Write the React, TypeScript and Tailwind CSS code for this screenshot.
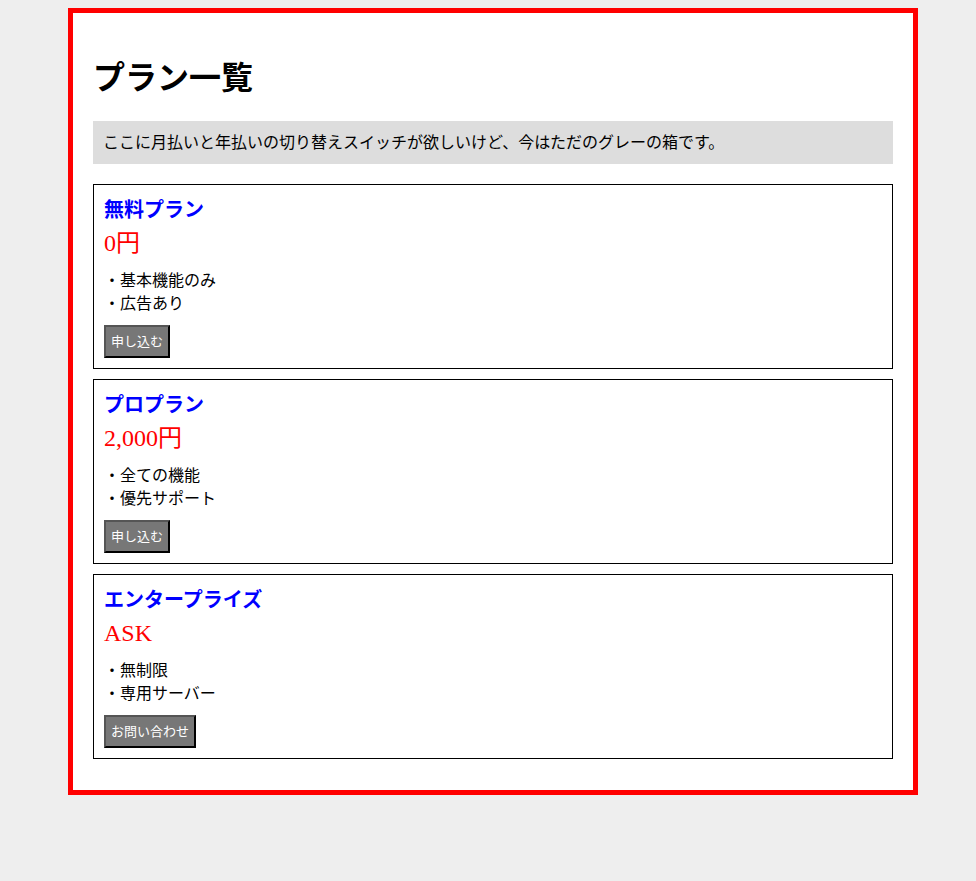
const plans = [
  { name: '無料プラン', price: '0円', features: ['基本機能のみ', '広告あり'], action: '申し込む' },
  { name: 'プロプラン', price: '2,000円', features: ['全ての機能', '優先サポート'], action: '申し込む' },
  { name: 'エンタープライズ', price: 'ASK', features: ['無制限', '専用サーバー'], action: 'お問い合わせ' },
]

function PlanCard({ plan }: { plan: (typeof plans)[number] }) {
  return (
    <div className="mb-[10px] border border-black p-[10px]">
      <h3 className="text-[20px] font-bold leading-[31px] text-[#0000ff]">{plan.name}</h3>
      <div className="text-[24px] leading-[35px] text-[#ff0000]">{plan.price}</div>
      <div className="mt-[8px] text-[16px] leading-[23px]">
        {plan.features.map((f) => (
          <div key={f}>・{f}</div>
        ))}
      </div>
      <button
        type="button"
        className="mt-[10px] border-2 border-b-black border-l-[#555] border-r-black border-t-[#555] bg-[#777] px-[5px] py-[5px] text-[13px] leading-[19px] text-white"
      >
        {plan.action}
      </button>
    </div>
  )
}

export default function App() {
  return (
    <div className="min-h-[881px] bg-[#eeeeee] pt-2 font-['Liberation_Serif','Noto_Sans_CJK_JP',serif] text-black">
      <div className="ml-[68px] w-[850px] border-[5px] border-[#ff0000] bg-white px-5 pt-5 pb-[21px]">
        <h1 className="mt-[22px] mb-[20px] text-[32px] font-bold leading-[46px]">プラン一覧</h1>
        <div className="mb-5 bg-[#dddddd] p-[10px] text-[16px] leading-[23px]">
          ここに月払いと年払いの切り替えスイッチが欲しいけど、今はただのグレーの箱です。
        </div>
        {plans.map((p) => (
          <PlanCard key={p.name} plan={p} />
        ))}
      </div>
    </div>
  )
}
